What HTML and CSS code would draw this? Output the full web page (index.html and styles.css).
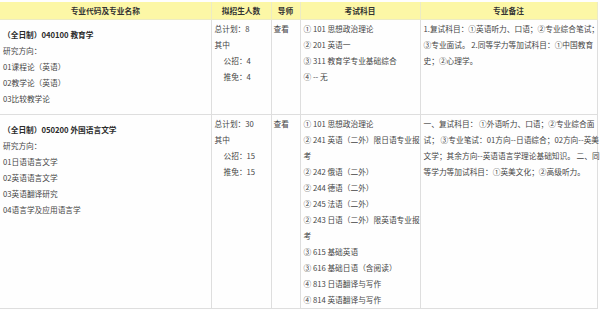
FILE: index.html
```html
<!DOCTYPE html>
<html lang="zh-CN">
<head>
<meta charset="utf-8">
<title>招生专业目录</title>
<link rel="stylesheet" href="styles.css">
</head>
<body>
<table class="plan">
  <colgroup>
    <col class="c-major">
    <col class="c-quota">
    <col class="c-tutor">
    <col class="c-exam">
    <col class="c-note">
  </colgroup>
  <thead>
    <tr>
      <th>专业代码及专业名称</th>
      <th>拟招生人数</th>
      <th>导师</th>
      <th>考试科目</th>
      <th>专业备注</th>
    </tr>
  </thead>
  <tbody>
    <tr>
      <td class="major">
        <div class="title">（全日制）040100 教育学</div>
        <div class="ln">研究方向：</div>
        <div class="ln">01课程论（英语）</div>
        <div class="ln">02教学论（英语）</div>
        <div class="ln">03比较教学论</div>
      </td>
      <td class="quota">
        <div class="ln">总计划：8</div>
        <div class="ln">其中</div>
        <div class="ln sub">公招：4</div>
        <div class="ln sub">推免：4</div>
      </td>
      <td class="tutor"><div class="ln">查看</div></td>
      <td class="exam">
        <div class="ln">① 101 思想政治理论</div>
        <div class="ln">② 201 英语一</div>
        <div class="ln">③ 311 教育学专业基础综合</div>
        <div class="ln">④ -- 无</div>
      </td>
      <td class="note">
        <div class="ln">1.复试科目：①英语听力、口语；②专业综合笔试；</div>
        <div class="ln">③专业面试。 2.同等学力等加试科目：①中国教育</div>
        <div class="ln">史；②心理学。</div>
      </td>
    </tr>
    <tr>
      <td class="major">
        <div class="title">（全日制）050200 外国语言文学</div>
        <div class="ln">研究方向：</div>
        <div class="ln">01日语语言文学</div>
        <div class="ln">02英语语言文学</div>
        <div class="ln">03英语翻译研究</div>
        <div class="ln">04语言学及应用语言学</div>
      </td>
      <td class="quota">
        <div class="ln">总计划：30</div>
        <div class="ln">其中</div>
        <div class="ln sub">公招：15</div>
        <div class="ln sub">推免：15</div>
      </td>
      <td class="tutor"><div class="ln">查看</div></td>
      <td class="exam">
        <div class="ln">① 101 思想政治理论</div>
        <div class="ln">② 241 英语（二外）限日语专业报</div>
        <div class="ln">考</div>
        <div class="ln">② 242 俄语（二外）</div>
        <div class="ln">② 244 德语（二外）</div>
        <div class="ln">② 245 法语（二外）</div>
        <div class="ln">② 243 日语（二外）限英语专业报</div>
        <div class="ln">考</div>
        <div class="ln">③ 615 基础英语</div>
        <div class="ln">③ 616 基础日语（含阅读）</div>
        <div class="ln">④ 813 日语翻译与写作</div>
        <div class="ln">④ 814 英语翻译与写作</div>
      </td>
      <td class="note">
        <div class="ln">一、复试科目： ①外语听力、口语；②专业综合面</div>
        <div class="ln">试； ③专业笔试：01方向--日语综合；02方向--英美</div>
        <div class="ln">文学；其余方向--英语语言学理论基础知识。 二、同</div>
        <div class="ln">等学力等加试科目：①英美文化；②高级听力。</div>
      </td>
    </tr>
  </tbody>
</table>
</body>
</html>
```

FILE: styles.css
```css
html, body {
  margin: 0;
  padding: 0;
  background: #fefefe;
}

body {
  padding-top: 2px;
  font-family: "Noto Sans CJK SC", "Noto Sans", sans-serif;
  font-size: 7.7px;
  color: #454545;
}

.plan {
  border-collapse: collapse;
  table-layout: fixed;
  width: 597px;
  background: #fefefe;
}

.c-major { width: 211px; }
.c-quota { width: 60px; }
.c-tutor { width: 29px; }
.c-exam { width: 120px; }
.c-note { width: 177px; }

.plan th {
  height: 17px;
  padding: 0;
  line-height: 17px;
  background: #fcf7a6;
  color: #333;
  font-weight: bold;
  text-align: center;
  border: 1px solid #ecebc4;
  border-top: none;
}

.plan th:first-child { border-left: none; }

.plan td {
  vertical-align: top;
  padding: 1px 3px 0;
  border: 1px solid #dedede;
}

.plan td:first-child { border-left: none; }

.plan tbody tr:first-child td { border-top: none; }

.ln {
  line-height: 16px;
  white-space: nowrap;
}

.major {
  padding-top: 7px !important;
  padding-bottom: 7px !important;
}

.title {
  line-height: 16px;
  font-weight: bold;
  color: #2a2a2a;
  white-space: nowrap;
}

.sub {
  padding-left: 9px;
}

.tutor {
  padding-left: 2px !important;
}
```
